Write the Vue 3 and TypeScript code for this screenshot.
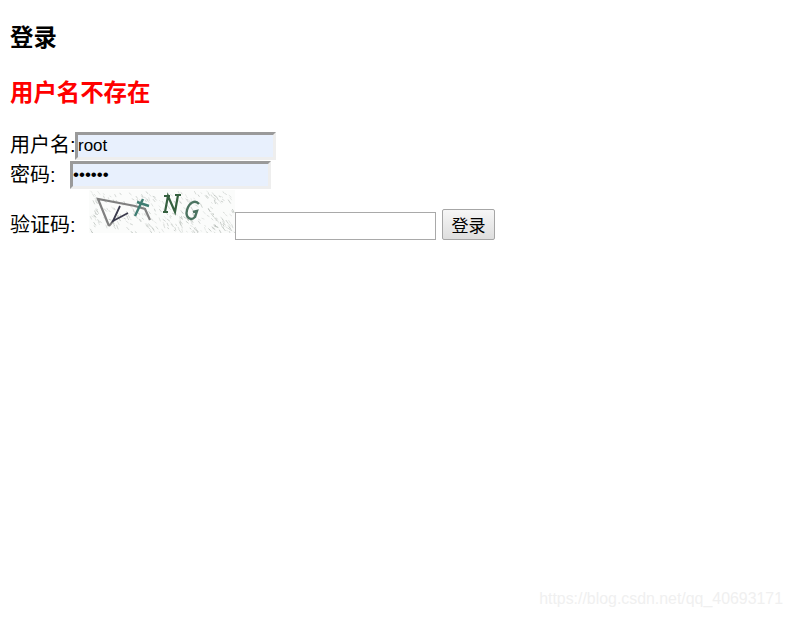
<script setup lang="ts">
import { ref } from 'vue';

const username = ref('root');
const password = ref('123456');
const code = ref('');

// speckle behind the captcha letters, same every render
const specks: { d: string; o: number }[] = [];
let seed = 7;
const next = () => {
  seed = (seed * 16807) % 2147483647;
  return seed / 2147483647;
};
for (let i = 0; i < 300; i++) {
  const x = 1 + next() * 144;
  const y = 1 + next() * 41;
  const dx = 1 + next() * 2;
  const dy = 1 + next() * 3;
  specks.push({
    d: `M${x.toFixed(1)} ${y.toFixed(1)}l${dx.toFixed(1)} ${dy.toFixed(1)}`,
    o: 0.2 + next() * 0.4,
  });
}
</script>

<template>
  <main class="page">
    <h3 class="title">登录</h3>
    <h3 class="error">用户名不存在</h3>
    <form class="form" @submit.prevent>
      <div class="row">
        <label class="label-user">用户名:</label><input v-model="username" class="filled" type="text" />
      </div>
      <div class="row">
        <label class="label-pass">密码:</label><input v-model="password" class="filled" type="password" />
      </div>
      <div class="row row--code">
        <label class="label-code">验证码:</label>
        <svg class="captcha" width="146" height="43" viewBox="0 0 146 43" fill="none">
          <rect width="146" height="43" fill="#fbfcfb" />
          <path v-for="(s, i) in specks" :key="i" :d="s.d" stroke="#a3aba5" :stroke-opacity="s.o" />
          <path d="M20 36 9 9 46 16 56 19 61 30" stroke="#808080" stroke-width="2.2" />
          <path d="M20 36 25 30" stroke="#808080" stroke-width="2" />
          <path d="M31 16 24 31 39 23" stroke="#3a3a4c" stroke-width="1.8" />
          <path d="M54 9 46 26M48 12 60 16" stroke="#3f7d72" stroke-width="2.4" />
          <path d="M76 22 79 6 86 22 89 5M75 6H81M86 5H92M74 22H79" stroke="#35603f" stroke-width="2.2" />
          <path d="M110 14C106 9 100 13 98 20 96 28 102 31 106 27L108 21 104 22" stroke="#4b7360" stroke-width="2.4" />
        </svg>
        <input v-model="code" class="code" type="text" />
        <button class="submit" type="submit">登录</button>
      </div>
    </form>
    <span class="watermark">https://blog.csdn.net/qq_40693171</span>
  </main>
</template>

<style scoped>
.page {
  position: relative;
  box-sizing: border-box;
  width: 789px;
  height: 617px;
  padding: 10px 10px 0;
  overflow: hidden;
  font-family: "Liberation Sans", "Noto Sans CJK SC", sans-serif;
  font-size: 20px;
  color: #000;
  background: #fff;
}

.title,
.error {
  margin: 0;
  font-size: 23.4px;
  font-weight: bold;
  line-height: 28px;
}

.title {
  margin-top: 14px;
}

.error {
  margin-top: 27px;
  color: #f00;
}

.form {
  margin-top: 25px;
}

.row {
  display: flex;
  align-items: flex-start;
}

.row + .row {
  margin-top: 1px;
}

.row label {
  flex: none;
  line-height: 23px;
  white-space: nowrap;
}

.label-user {
  width: 65px;
  margin-top: 2px;
}

.label-pass {
  width: 60px;
  margin-top: 3px;
}

.label-code {
  width: 79px;
  align-self: flex-end;
  margin-bottom: 3px;
}

.filled {
  box-sizing: border-box;
  width: 201px;
  height: 28px;
  padding: 0;
  border: 3px solid;
  border-color: #9a9a9a #eeeeee #eeeeee #9a9a9a;
  border-radius: 0;
  outline: none;
  font-family: inherit;
  font-size: 17px;
  color: #000;
  background: #e8f0fd;
}

.row--code {
  align-items: flex-end;
  height: 50px;
}

.captcha {
  display: block;
  flex: none;
  margin-bottom: 7px;
}

.code {
  box-sizing: border-box;
  width: 201px;
  height: 28px;
  padding: 1px 2px;
  border: 1px solid #a9a9a9;
  border-radius: 0;
  outline: none;
  background: #fff;
}

.submit {
  box-sizing: border-box;
  width: 53px;
  height: 31px;
  margin-left: 6px;
  padding: 0;
  border: 1px solid #a6a6a6;
  border-radius: 2px;
  font-family: inherit;
  font-size: 17px;
  color: #000;
  background: linear-gradient(#f6f6f6, #dedede);
}

.watermark {
  position: absolute;
  top: 590px;
  right: 6px;
  font-size: 15.9px;
  color: #f0f0f0;
}
</style>
